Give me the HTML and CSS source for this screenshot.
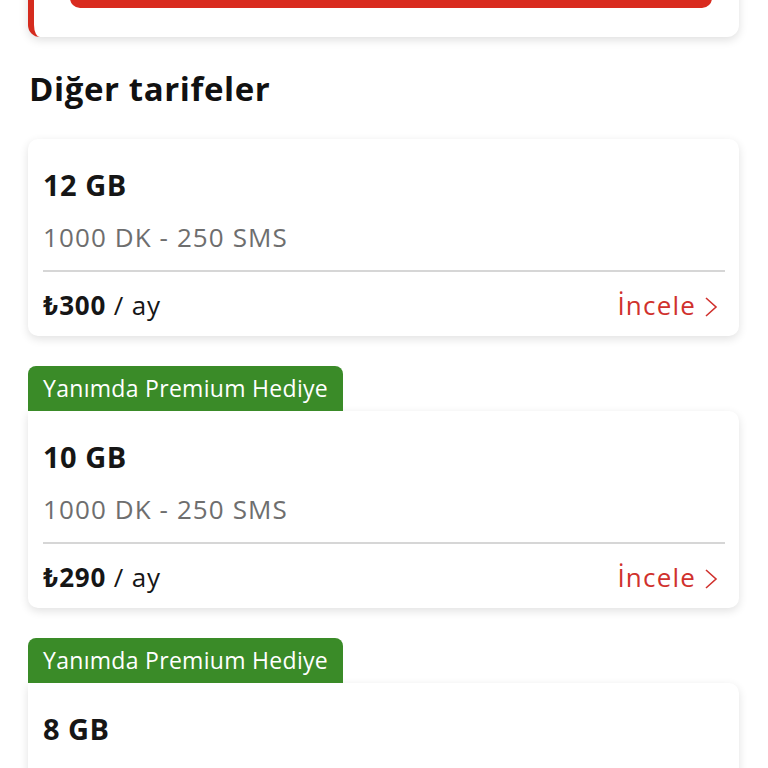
FILE: index.html
```html
<!DOCTYPE html>
<html>
  <head>
    <meta charset="UTF-8">
    <title>Diğer tarifeler</title>
    <link rel="stylesheet" href="styles.css">
  </head>
  <body>
    <div class="current-card">
      <div class="current-button"></div>
    </div>

    <h2 class="section-title">Diğer tarifeler</h2>

    <div class="tariff">
      <div class="tariff-card">
        <div class="tariff-data">12 GB</div>
        <div class="tariff-info">1000 DK - 250 SMS</div>
        <div class="tariff-footer">
          <div class="tariff-price"><strong>₺300</strong> / ay</div>
          <a class="tariff-link" href="#">İncele
            <svg width="14" height="24" viewBox="0 0 14 24"><path d="M2 3 L12 12 L2 21" fill="none" stroke="currentColor" stroke-width="1.6"/></svg>
          </a>
        </div>
      </div>
    </div>

    <div class="tariff">
      <div class="tariff-badge">Yanımda Premium Hediye</div>
      <div class="tariff-card has-badge">
        <div class="tariff-data">10 GB</div>
        <div class="tariff-info">1000 DK - 250 SMS</div>
        <div class="tariff-footer">
          <div class="tariff-price"><strong>₺290</strong> / ay</div>
          <a class="tariff-link" href="#">İncele
            <svg width="14" height="24" viewBox="0 0 14 24"><path d="M2 3 L12 12 L2 21" fill="none" stroke="currentColor" stroke-width="1.6"/></svg>
          </a>
        </div>
      </div>
    </div>

    <div class="tariff">
      <div class="tariff-badge">Yanımda Premium Hediye</div>
      <div class="tariff-card has-badge is-cut">
        <div class="tariff-data">8 GB</div>
      </div>
    </div>
  </body>
</html>
```

FILE: styles.css
```css
body {
  font-family: "Open Sans", Roboto, sans-serif;
  margin: 0;
  padding: 0 29px 0 28px;
  background: #fff;
  color: #161616;
  height: 768px;
  overflow: hidden;
}
.current-card {
  margin-top: -60px;
  height: 97px;
  background: #fff;
  border-left: 6px solid #d52b1e;
  border-radius: 12px;
  box-shadow: 0 3px 10px rgba(0, 0, 0, 0.13);
  padding: 0 27px 0 36px;
}
.current-button {
  height: 68px;
  background: #d92b1f;
  border-radius: 0 0 10px 10px;
}
.section-title {
  margin: 32px 0 0 1px;
  font-size: 33px;
  font-weight: 700;
  line-height: 40px;
  color: #111;
  letter-spacing: 0.6px;
}
.tariff {
  margin-top: 30px;
}
.section-title + .tariff {
  margin-top: 30px;
}
.tariff-badge {
  display: inline-block;
  background: #3a8b28;
  color: #fff;
  font-size: 23px;
  letter-spacing: 0.3px;
  line-height: 45px;
  height: 45px;
  padding: 0 15px;
  border-radius: 8px 8px 0 0;
}
.tariff-card {
  background: #fff;
  border-radius: 10px;
  box-shadow: 0 3px 10px rgba(0, 0, 0, 0.12);
  padding: 28px 14px 14px 15px;
}
.tariff-card.has-badge {
  border-top-left-radius: 0;
}
.tariff-card.is-cut {
  height: 120px;
}
.tariff-data {
  font-size: 29px;
  font-weight: 700;
  line-height: 36px;
  color: #161616;
  letter-spacing: 0.5px;
}
.tariff-info {
  margin-top: 18px;
  font-size: 26px;
  letter-spacing: 1.1px;
  line-height: 32px;
  color: #6e6e6e;
}
.tariff-footer {
  margin-top: 17px;
  border-top: 2px solid #d6d6d6;
  padding-top: 16px;
  display: flex;
  justify-content: space-between;
  align-items: center;
}
.tariff-price {
  font-size: 26px;
  letter-spacing: 0.8px;
  line-height: 34px;
  color: #161616;
}
.tariff-price strong {
  font-weight: 700;
}
.tariff-link {
  display: flex;
  align-items: center;
  gap: 8px;
  color: #d0312d;
  text-decoration: none;
  font-size: 26px;
  letter-spacing: 1.2px;
  line-height: 34px;
  padding-right: 7px;
}
.tariff-link svg {
  margin-top: 4px;
}
```
